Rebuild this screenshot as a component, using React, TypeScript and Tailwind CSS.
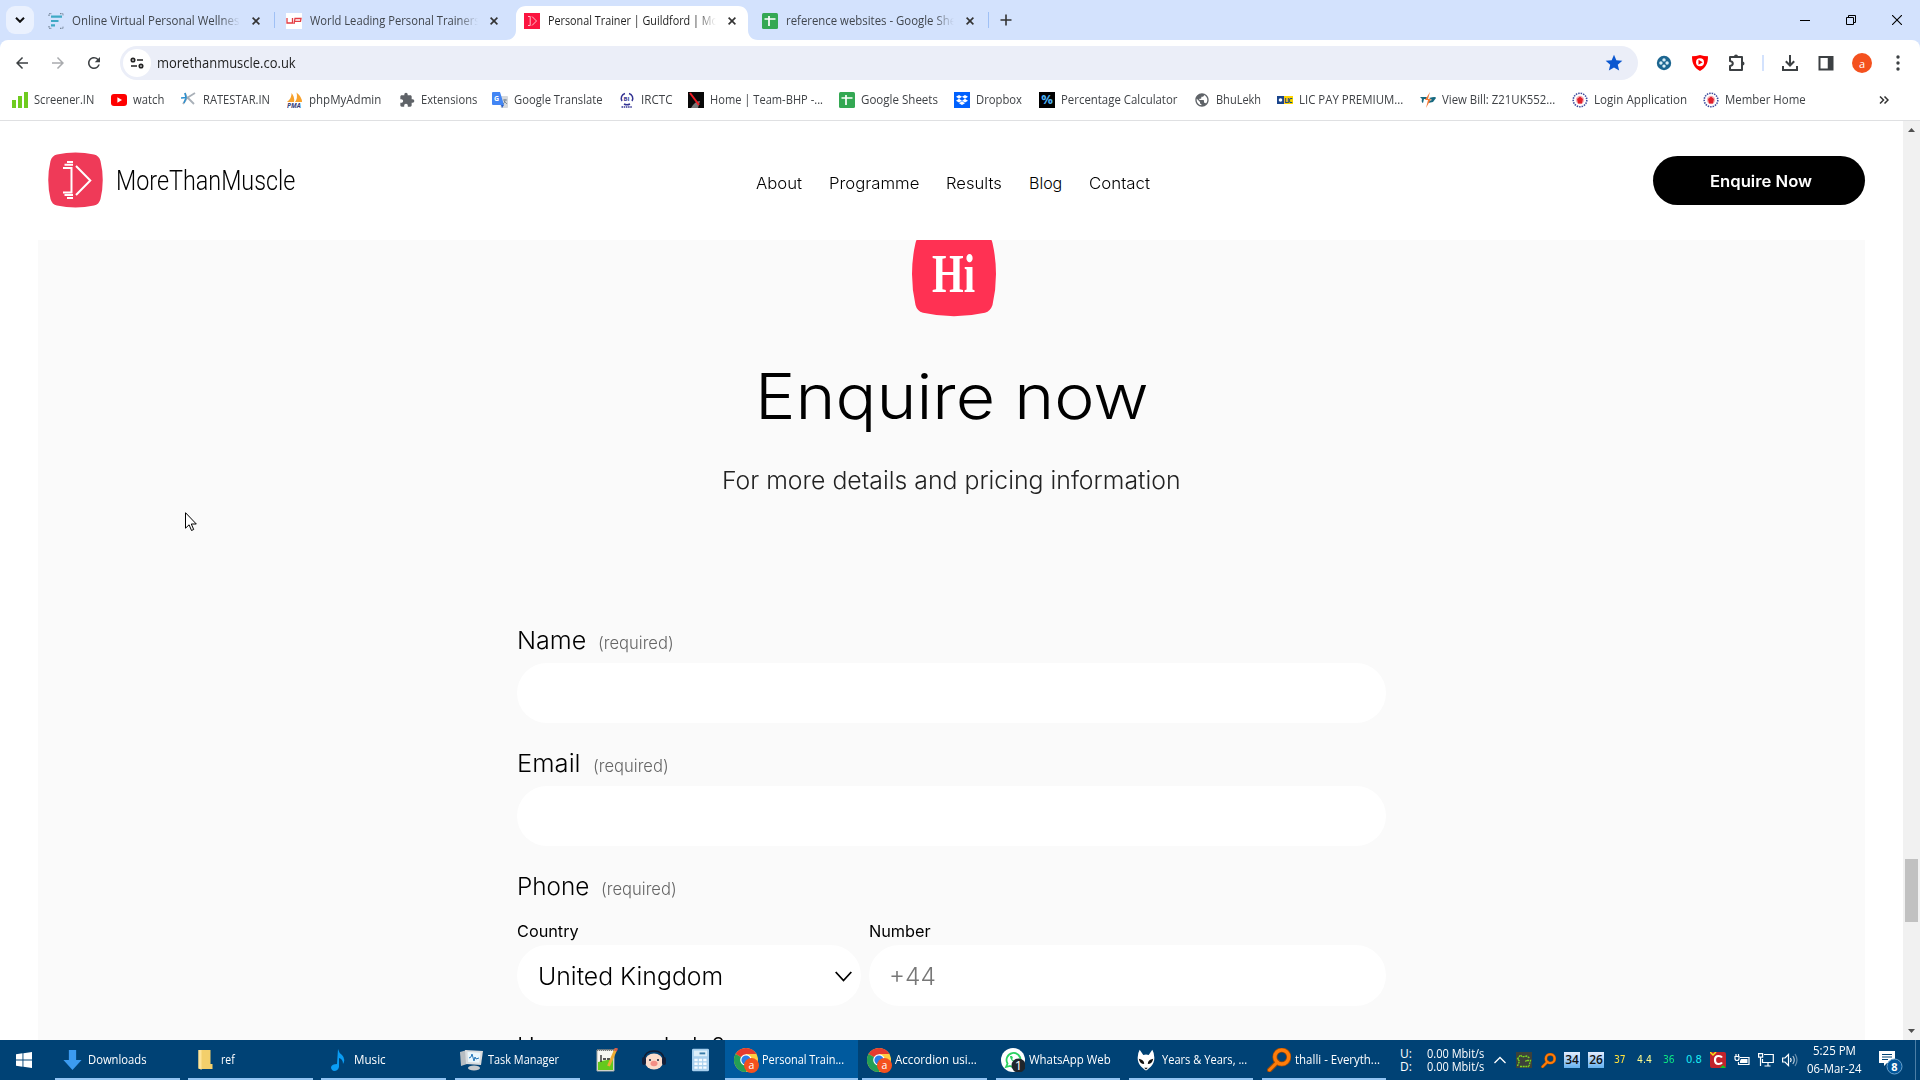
import { useLayoutEffect, useRef, useState, type ReactNode } from "react";
import { FaDropbox } from "react-icons/fa";
import { MdExtension, MdPublic, MdRefresh, MdStar, MdArrowBack, MdArrowForward } from "react-icons/md";

/** One line of text that is stretched or condensed to a given width. */
function Fit({ w, children, className = "" }: { w: number; children: ReactNode; className?: string }) {
  const ref = useRef<HTMLSpanElement>(null);
  const [k, setK] = useState(1);
  useLayoutEffect(() => {
    if (ref.current) setK(w / ref.current.offsetWidth);
  }, [w]);
  return (
    <span className={"block shrink-0 whitespace-nowrap " + className} style={{ width: w }}>
      <span ref={ref} className="inline-block origin-left whitespace-nowrap" style={{ transform: `scaleX(${k})` }}>
        {children}
      </span>
    </span>
  );
}

function X({ className = "" }: { className?: string }) {
  return (
    <svg viewBox="0 0 8 8" className={"size-2 shrink-0 " + className} fill="none" stroke="currentColor" strokeWidth="1.6">
      <path d="M.6.6l6.8 6.8M7.4.6L.6 7.4" />
    </svg>
  );
}

function Sheets() {
  return (
    <svg viewBox="0 0 16 16" className="size-4 shrink-0">
      <rect width="16" height="16" rx="1.5" fill="#34a853" />
      <path d="M7 3v10M2.5 6h11" stroke="#fff" strokeWidth="1.7" />
    </svg>
  );
}

function MuscleIcon() {
  return (
    <svg viewBox="0 0 16 16" className="size-4 shrink-0">
      <rect width="16" height="16" fill="#fb1440" />
      <path d="M4 3.5h2.2v9H4M8 3.5L12.5 8 8 12.5" stroke="#ffc0cb" fill="none" />
    </svg>
  );
}

function LinesIcon() {
  return (
    <svg viewBox="0 0 16 16" className="size-4 shrink-0" fill="none">
      <path d="M1 3V.7h3M12 .7h3V3M1 13v2.3h3M12 15.3h3V13" stroke="#456" strokeWidth=".8" strokeDasharray="1.5 1" />
      <path d="M3 3.7h11M3 8h7.500M3 12.300h4" stroke="#3fa9c5" strokeWidth="2.200" />
    </svg>
  );
}

function UpIcon() {
  return (
    <svg viewBox="0 0 16 16" className="size-4 shrink-0" fill="none">
      <rect width="16" height="16" fill="#fff" />
      <path d="M1 5v5h5.5V5M8 11l1-5.5h6l-.5 2.8H9" stroke="#e33d43" strokeWidth="1.3" />
    </svg>
  );
}

const tabs = [
  { t: "Online Virtual Personal Wellness", w: 173, icon: <LinesIcon />, sep: true },
  { t: "World Leading Personal Trainers", w: 170, icon: <UpIcon />, sep: false },
  { t: "Personal Trainer | Guildford | More", w: 180, icon: <MuscleIcon />, active: true },
  { t: "reference websites - Google Sheets", w: 186, icon: <Sheets />, sep: true },
];

function TabStrip() {
  return (
    <div className="flex h-10 items-stretch bg-[#d3e2fd]">
      <div className="ml-1.5 mr-1.5 mt-1.5 flex size-7 items-center justify-center rounded-[9px] bg-[#eaf1fe]">
        <svg viewBox="0 0 10 6" className="h-1.5 w-2.5" fill="none" stroke="#111" strokeWidth="2"><path d="M1 .8l4 4 4-4" /></svg>
      </div>
      {tabs.map((t) => (
        <div key={t.t} className="relative flex w-[238px] items-center pt-[1px]">
          {t.active && (
            <svg viewBox="0 0 252 34" className="absolute -left-2.5 top-1.5 h-[34px] w-[252px]" fill="#fff">
              <path d="M0 34c6 0 10-4 10-10V10C10 4 14 0 20 0h212c6 0 10 4 10 10v14c0 6 4 10 10 10z" />
            </svg>
          )}
          <div className="relative ml-2 flex items-center">
            {t.icon}
            <div className="ml-2 w-[168px] overflow-hidden [mask-image:linear-gradient(90deg,#000_88%,transparent)]">
              <Fit w={t.w} className={t.active ? "text-[12px] leading-4 text-[#1f1f1f]" : "text-[12px] leading-4 text-[#41464d]"}>{t.t}</Fit>
            </div>
            <X className="ml-3 text-[#333]" />
          </div>
          {t.sep && <i className="absolute right-[3px] top-3 h-4 w-px bg-[#9fc0f5]" />}
        </div>
      ))}
      <svg viewBox="0 0 12 12" className="ml-2 mt-3.5 size-3" fill="none" stroke="#333" strokeWidth="1.6"><path d="M6 .5v11M.5 6h11" /></svg>
      <div className="ml-auto mr-[18px] flex items-center gap-9 text-black">
        <svg viewBox="0 0 10 10" className="size-2.5" stroke="currentColor"><path d="M0 5.5h10" /></svg>
        <svg viewBox="0 0 10 10" className="size-2.5" fill="none" stroke="currentColor"><path d="M.5 2.5h7v7h-7zM2.5 2.5v-2h7v7h-2" /></svg>
        <svg viewBox="0 0 10 10" className="size-2.5" fill="none" stroke="currentColor" strokeWidth="1.1"><path d="M0 0l10 10M10 0L0 10" /></svg>
      </div>
    </div>
  );
}

function Toolbar() {
  return (
    <div className="bg-[#d3e2fd]">
      <div className="flex h-[46px] items-center rounded-t-lg bg-white text-[#3c4043]">
        <MdArrowBack className="ml-[13px] size-[18px]" />
        <MdArrowForward className="ml-[18px] size-[18px] text-[#a9abae]" />
        <MdRefresh className="ml-[18px] size-[18px]" />
        <div className="ml-[17px] flex h-[34px] w-[1518px] items-center rounded-full bg-[#ebeef8]">
          <div className="ml-[3px] flex size-7 items-center justify-center rounded-full bg-white">
            <svg viewBox="0 0 14 12" className="h-3 w-3.5" fill="none" stroke="#222" strokeWidth="1.7">
              <circle cx="3" cy="3" r="1.7" /><path d="M7 3h6M1 9h6" /><circle cx="11" cy="9" r="1.7" />
            </svg>
          </div>
          <Fit w={139} className="ml-1.5 text-[14px] leading-5 text-[#1f1f1f]">morethanmuscle.co.uk</Fit>
          <MdStar className="ml-auto mr-[14px] size-5 text-[#0b57d0]" />
        </div>
        <svg viewBox="0 0 16 16" className="ml-[18px] size-4">
          <circle cx="8" cy="8" r="7.2" fill="#1c6690" />
          <g fill="#d8eef6"><circle cx="8" cy="4.9" r="1.700" /><circle cx="8" cy="11.100" r="1.700" /><circle cx="4.900" cy="8" r="1.700" /><circle cx="11.100" cy="8" r="1.700" /></g>
        </svg>
        <svg viewBox="0 0 16 16" className="ml-5 size-4">
          <path d="M0 1.3Q4 1.3 8 0q4 1.3 8 1.3C16 9 13.500 13 8 16 2.500 13 0 9 0 1.300z" fill="#f00" />
          <circle cx="8" cy="7.300" r="4" fill="#fff" /><path d="M6.500 4.800l4.200 2.500-4.200 2.500z" fill="#f00" />
        </svg>
        <svg viewBox="0 0 18 18" className="ml-[20px] size-[18px]" fill="none" stroke="currentColor" strokeWidth="2">
          <path d="M2 3h12v13H2v-4q2.800-.500 2.800-2.500T2 7z" strokeLinejoin="round" />
          <path d="M6 2.500a2 2 0 0 1 4 0zM14.500 7.500a2 2 0 0 1 0 4z" fill="currentColor" stroke="none" />
        </svg>
        <i className="ml-4 h-4 w-0.5 bg-[#d3e2fd]" />
        <svg viewBox="0 0 16 16" className="ml-[18px] size-4" fill="none" stroke="currentColor" strokeWidth="2"><path d="M8 0v10M3.800 6.300L8 10.500l4.200-4.200M1 11v4h14v-4" /></svg>
        <svg viewBox="0 0 16 16" className="ml-5 size-4" fill="none" stroke="currentColor" strokeWidth="2"><path d="M1.500 2h13v12.500h-13z" /><path d="M12 1v14" strokeWidth="4.500" /></svg>
        <div className="ml-[18px] flex size-5 items-center justify-center rounded-full bg-[#f4511e] text-[11px] leading-none text-white">a</div>
        <svg viewBox="0 0 4 16" className="ml-6 h-4 w-1" fill="currentColor"><circle cx="2" cy="2" r="1.700" /><circle cx="2" cy="8" r="1.700" /><circle cx="2" cy="14" r="1.700" /></svg>
      </div>
    </div>
  );
}

const ic = "size-4 shrink-0";
const emblem = (
  <svg viewBox="0 0 16 16" className={ic}>
    <circle cx="8" cy="8" r="6.800" fill="#fff" stroke="#3b4a9c" strokeWidth="1.600" strokeDasharray="1.500 1" />
    <circle cx="8" cy="8" r="4.200" fill="#f7b5b8" /><path d="M5 7l3-2.500L11 7l-1 4.500H6z" fill="#e0202c" />
  </svg>
);
/** Label, label width, distance to the next bookmark, icon. */
const bookmarks: [string, number, number, ReactNode][] = [
  ["Screener.IN", 60, 99, <svg viewBox="0 0 16 16" className={ic} fill="#6fcb1f"><path d="M0 8h4v8H0zM6 4h4v12H6zM12 0h4v16h-4z" /></svg>],
  ["watch", 31, 70, <svg viewBox="0 0 16 16" className={ic}><rect y="2" width="16" height="12" rx="3" fill="#f00" /><path d="M6.400 5.300L11 8l-4.600 2.700z" fill="#fff" /></svg>],
  ["RATESTAR.IN", 67, 106, <svg viewBox="0 0 16 16" className={ic} fill="none"><path d="M4 1l2 5L14 1M6 6L2 12M7 6l6 6" stroke="#a9b0b8" strokeWidth="1.800" /><path d="M0 6l5-.5L4 1M5 6l-2 5" stroke="#2d91d0" strokeWidth="1.500" /></svg>],
  ["phpMyAdmin", 72, 112, <svg viewBox="0 0 16 16" className={ic}><path d="M0 10Q5 6 4.500 1 8 5 7 10zM8 10q3-4 1.500-9.500Q15 5 15 10z" fill="#f7a12b" /><text x="0" y="15.500" fontSize="6.500" fontWeight="700" fontStyle="italic" fill="#34407a">PMA</text></svg>],
  ["Extensions", 56, 93, <MdExtension className={ic + " text-[#5f6368]"} />],
  ["Google Translate", 89, 127, <svg viewBox="0 0 16 16" className={ic}><path d="M6 4h9q1 0 1 1v10q0 1-1 1H9z" fill="#d5d8dc" /><path d="M1 0h7l4 13H1q-1 0-1-1V1q0-1 1-1z" fill="#4285f4" /><path d="M9 13h3l-2 3z" fill="#2b5fc7" /><text x="2" y="9" fontSize="7" fontWeight="700" fill="#fff">G</text><path d="M11 8h4M13 7v1q0 3-2 4M12 9l3 3" stroke="#6b7a86" strokeWidth=".8" fill="none" /></svg>],
  ["IRCTC", 31, 69, <svg viewBox="0 0 16 16" className={ic} fill="none" stroke="#353593"><path d="M3 9a5 5 0 0 1 3-7.500M10 1.500A5 5 0 0 1 13 9M5 12q3 1.500 6 0" strokeWidth="1.500" /><text x="4.500" y="9" fontSize="6" fontWeight="700" fill="#353593" stroke="none">BI</text><path d="M2.500 15h11" strokeWidth="1.600" strokeDasharray="1.500 .7" /></svg>],
  ["Home | Team-BHP -...", 113, 151, <svg viewBox="0 0 16 16" className={ic}><path d="M0 0h16v16H0z" fill="#080808" /><path d="M3 16q4-7 9-7l-2 7z" fill="#777" /><path d="M2 1l9 12" stroke="#f01c24" strokeWidth="2" /></svg>],
  ["Google Sheets", 77, 115, <Sheets />],
  ["Dropbox", 46, 85, <span className="flex size-4 shrink-0 items-center justify-center bg-[#0061fe]"><FaDropbox className="size-3 text-white" /></span>],
  ["Percentage Calculator", 116, 155, <span className="flex size-4 shrink-0 items-center justify-center bg-black text-[13px] font-bold leading-none text-[#4db2f5]">%</span>],
  ["BhuLekh", 45, 83, <MdPublic className={ic + " text-[#5f6368]"} />],
  ["LIC PAY PREMIUM...", 104, 143, <svg viewBox="0 0 16 16" className={ic}><path d="M0 4h7v8H0z" fill="#19448c" /><path d="M7 4h9v8H7z" fill="#ffd400" /><circle cx="3.500" cy="8" r="1.800" fill="#fff" /><text x="7.300" y="10.500" fontSize="6.500" fontWeight="700" textLength="8" fill="#19448c">LIC</text></svg>],
  ["View Bill: Z21UK552...", 113, 152, <svg viewBox="0 0 16 16" className={ic}><path d="M0 5h7l-1 2H4l-1 4Q1 10 2 7zM9 6q7-2 7 0l-3 4-5 1 1-2 3-1z" fill="#17687f" /><path d="M10 0L5 8h3l-2 8 5-9H8z" fill="#f47a35" /></svg>],
  ["Login Application", 93, 131, emblem],
  ["Member Home", 81, 110, emblem],
];

function Bookmarks() {
  return (
    <div className="flex h-[35px] items-center border-b border-[#dfe0e2] bg-white pb-[7px] pl-3 text-[12px] leading-4 text-[#3f4246]">
      {bookmarks.map(([label, w, stride, icon]) => (
        <div key={label} className="flex shrink-0 items-center gap-1.5" style={{ width: stride }}>
          {icon}
          <Fit w={w}>{label}</Fit>
        </div>
      ))}
      <svg viewBox="0 0 10 8" className="ml-auto mr-[31px] h-2 w-2.5 shrink-0" fill="none" stroke="#333" strokeWidth="1.500"><path d="M1 .5L4.500 4 1 7.500M5.500.5L9 4 5.500 7.500" /></svg>
    </div>
  );
}

function SiteHeader() {
  return (
    <header className="flex h-[119px] shrink-0 items-center bg-white pb-px pl-12 pr-[38px] text-black">
      <svg viewBox="0 0 55 56" className="h-14 w-[55px]">
        <path d="M9 2.500Q27.500-1.500 46 2.500q5 1 6.500 6.500 4.500 19 0 38-1.500 5.500-6.500 6.500-18.500 4-37 0-5-1-6.500-6.500-4.500-19 0-38Q4 3.500 9 2.500z" fill="#ef3a58" />
        <path d="M19 10h6M16.500 12.800H25M15 16h8.500v24.500H15M16.500 43H25M19 46h6M28 14l14.300 14.500L28 43" fill="none" stroke="#fff" strokeWidth="2" />
      </svg>
      <Fit w={179} className="ml-[13px] mt-px font-[Roboto] text-[27px] font-[350] leading-8">MoreThanMuscle</Fit>
      <nav className="ml-[461px] mt-[5px] flex gap-[27px] text-[16px] font-[350] leading-5">
        <Fit w={46}>About</Fit>
        <Fit w={90}>Programme</Fit>
        <Fit w={56}>Results</Fit>
        <Fit w={33}>Blog</Fit>
        <Fit w={61}>Contact</Fit>
      </nav>
      <button className="ml-auto flex h-[49px] w-[212px] items-center rounded-full bg-black pl-[55px] pt-0.5 text-[16px] font-semibold leading-5 text-white">
        <Fit w={102}>Enquire Now</Fit>
      </button>
    </header>
  );
}

function Label({ text, w }: { text: string; w: number }) {
  return (
    <div className="flex h-[30px] items-baseline gap-3 text-[24px] font-[350] leading-[30px] text-black">
      <Fit w={w}>{text}</Fit>
      <Fit w={76} className="text-[17px] text-[#666]">(required)</Fit>
    </div>
  );
}

function Enquiry() {
  return (
    <main className="ml-[38px] flex w-[1827px] flex-1 flex-col items-center overflow-hidden bg-[#fafafa]">
      <div className="relative ml-[5px] h-[78px] w-[88px] shrink-0">
        <svg viewBox="0 10 88 78" className="h-[78px] w-[88px]">
          <path d="M14 4Q44-3 74 4q7 2 8.500 9 7 31 0 62-2 6-7.500 7.800-31 7-62 0-6-1.800-7.500-7.800-7-31 0-62Q7 6 14 4z" fill="#ff3153" />
        </svg>
        <div className="absolute left-[22px] top-[4px] font-['Liberation_Serif'] text-[54px] font-bold leading-[60px] text-white"><Fit w={43}>Hi</Fit></div>
      </div>
      <h1 className="mt-[38px] text-[63px] font-light leading-20 text-black"><Fit w={394}>Enquire now</Fit></h1>
      <p className="mt-[29px] text-[24px] font-light leading-8 text-[#222]"><Fit w={459}>For more details and pricing information</Fit></p>
      <form className="mt-[129px] flex w-[869px] flex-col">
        <Label text="Name" w={69} />
        <div className="mt-[7px] h-[60px] shrink-0 rounded-full bg-white" />
        <div className="mt-[26px]"><Label text="Email" w={64} /></div>
        <div className="mt-[7px] h-[60px] shrink-0 rounded-full bg-white" />
        <div className="mt-[26px]"><Label text="Phone" w={72} /></div>
        <div className="mt-[19px] flex gap-2 text-[16px] leading-5 text-black">
          <div className="w-[344px]">
            <Fit w={62} className="font-[380]">Country</Fit>
            <div className="mt-1 flex h-[61px] items-center rounded-full bg-white pl-5 pr-2.5 pt-px text-[24px] font-[350] leading-8">
              <Fit w={185} className="ml-px mt-0.5">United Kingdom</Fit>
              <svg viewBox="0 0 17 11" className="ml-auto mr-[-1px] h-[11px] w-[17px]" fill="none" stroke="#000" strokeWidth="1.800"><path d="M.7 1l7.800 8.500L16.300 1" /></svg>
            </div>
          </div>
          <div className="flex-1">
            <Fit w={62} className="font-[380]">Number</Fit>
            <div className="mt-1 flex h-[61px] items-center rounded-full bg-white pl-5 pt-px text-[24px] font-light leading-8 text-[#777]"><Fit w={47} className="mt-0.5">+44</Fit></div>
          </div>
        </div>
        <div className="mt-[26px] text-[24px] font-[350] leading-[30px] text-black"><Fit w={207}>How can we help?</Fit></div>
      </form>
    </main>
  );
}

function Scrollbar() {
  return (
    <div className="flex w-[17px] flex-col items-center bg-[#f1f1f1]">
      <svg viewBox="0 0 7 4" className="mt-[7px] h-1 w-[7px]" fill="#505050"><path d="M3.500 0L7 4H0z" /></svg>
      <div className="mt-[727px] h-[63px] w-[13px] bg-[#c1c1c1]" />
      <svg viewBox="0 0 7 4" className="mb-[7px] mt-auto h-1 w-[7px]" fill="#505050"><path d="M3.500 4L7 0H0z" /></svg>
    </div>
  );
}

function Chrome() {
  return (
    <svg viewBox="0 0 24 24" className="size-6 shrink-0 overflow-visible">
      <circle cx="12" cy="12" r="12" fill="#ffcd40" />
      <path d="M12 12L1.600 6A12 12 0 0 1 22.400 6H12z" fill="#e53b2f" />
      <path d="M1.600 6A12 12 0 0 0 12 24l5-9-5-3z" fill="#239f55" />
      <circle cx="12" cy="12" r="5.800" fill="#fff" /><circle cx="12" cy="12" r="4.600" fill="#2b7de9" />
      <circle cx="17.500" cy="17.500" r="7.500" fill="#f4511e" />
      <text x="17.500" y="21" fontSize="10.500" textAnchor="middle" fill="#fff">a</text>
    </svg>
  );
}

function Search({ className }: { className: string }) {
  return (
    <svg viewBox="0 0 24 24" className={className} fill="none">
      <path d="M10.500 14L2.500 22" stroke="#9d4b08" strokeWidth="5" strokeLinecap="round" /><circle cx="14.800" cy="9" r="7" stroke="#9d4b08" strokeWidth="5" />
      <path d="M10.500 14L2.500 22" stroke="#ff7d0a" strokeWidth="3" strokeLinecap="round" /><circle cx="14.800" cy="9" r="7" stroke="#ff7d0a" strokeWidth="3.400" />
    </svg>
  );
}

function Task({ box, icon, label, w, active }: { box: string; icon: ReactNode; label: string; w: number; active?: boolean }) {
  return (
    <div className={"flex h-10 shrink-0 items-center gap-1 border-b-2 border-[#92c4f3] pt-0.5 " + (active ? "bg-[#005a9e] " : "") + box}>
      <span className="flex size-6 shrink-0 items-center justify-center">{icon}</span>
      <Fit w={w}>{label}</Fit>
    </div>
  );
}

function Taskbar() {
  return (
    <footer className="flex h-10 shrink-0 items-center bg-[#004275] text-[12px] leading-4 text-white">
      <svg viewBox="0 0 16 16" className="ml-4 size-4 shrink-0" fill="#fff"><path d="M0 2.300L6.500 1.300v6.200H0zM7.400 1.200L16 0v7.500H7.400zM0 8.500h6.500v6.200L0 13.700zM7.400 8.500H16V16l-8.600-1.200z" /></svg>
      <Task box="ml-[23px] w-[125px] pl-[5px]" w={59} label="Downloads" icon={<svg viewBox="0 0 20 22" className="h-[20px] w-[19px]"><path d="M6 0h8v11h6L10 22 0 11h6z" fill="#3c9bf0" /></svg>} />
      <Task box="ml-2 w-[125px] pl-[5px]" w={14} label="ref" icon={<svg viewBox="0 0 14 20" className="h-5 w-[15px]"><path d="M0 0h12v14h2v5H0z" fill="#f3cf6b" /><path d="M0 0h3v20l-3-2z" fill="#fde49a" /></svg>} />
      <Task box="ml-2 w-[125px] pl-[5px]" w={32} label="Music" icon={<svg viewBox="0 0 14 22" className="h-[22px] w-[14px]"><path d="M7 0q1 4 4 6 4 4 1 9 0-5-4-6v9q-1 4-5 4-3-1-3-4 1-3 6-3z" fill="#0a9df4" /></svg>} />
      <Task box="ml-[9px] w-[125px] pl-[5px]" w={71} label="Task Manager" icon={<svg viewBox="0 0 24 22" className="h-[22px] w-6"><path d="M0 3l7-2v14l-6 2z" fill="#b7bdc2" /><path d="M5 1l18 1-2 14-15-1z" fill="#d9dcde" /><path d="M7.500 3l13 .7-1.300 10-11-.7z" fill="#eaf7fd" /><path d="M9 9l2-1 1-3 2 7 1-4 1 2 3-1" stroke="#2375b8" fill="none" /><ellipse cx="14" cy="19" rx="6" ry="2.500" fill="#c7cbce" /></svg>} />
      <svg viewBox="0 0 22 24" className="ml-4 h-6 w-[22px] shrink-0"><path d="M1 2h17v21H1z" fill="#f7f7f2" stroke="#a8aca5" /><path d="M1 2h17" stroke="#777" strokeDasharray="1 1" strokeWidth="2" /><path d="M2 14q8-2 15-3v11H2z" fill="#65c91d" /><path d="M5 7v7M7 11h3M11 11h3" stroke="#222" strokeWidth="1.300" /><path d="M20 1L12.500 18" stroke="#edac33" strokeWidth="3" /><path d="M20.500 0l-1 3" stroke="#d65d4b" strokeWidth="3" /></svg>
      <svg viewBox="0 0 24 20" className="ml-[24px] h-5 w-6 shrink-0"><ellipse cx="12" cy="11.500" rx="9" ry="8" fill="#fbdccb" /><path d="M2 9Q3 1 12 1t10 8" fill="none" stroke="#101c33" strokeWidth="1.600" /><ellipse cx="12" cy="13.500" rx="3.500" ry="2.700" fill="#f38f86" /><g fill="#14203a"><rect y="7" width="4" height="8" rx="2" /><rect x="20" y="7" width="4" height="8" rx="2" /><circle cx="8" cy="10" r="1" /><circle cx="16" cy="10" r="1" /></g></svg>
      <svg viewBox="0 0 18 24" className="ml-[26px] h-6 w-[17px] shrink-0"><rect width="18" height="24" rx="1.500" fill="#a8d0ee" /><path d="M2 2h14v6H2z" fill="#dceffa" /><path d="M8 5h6" stroke="#397da9" strokeWidth="2" /><path d="M2.500 12h13M2.500 16h13M2.500 20h13" stroke="#f7fcff" strokeWidth="2.500" strokeDasharray="3.500 1.200" /></svg>
      <Task box="ml-4 w-[133px] pl-[9px]" w={82} label="Personal Train..." active icon={<Chrome />} />
      <Task box="ml-1 w-[125px] pl-[5px]" w={82} label="Accordion usi..." icon={<Chrome />} />
      <Task box="ml-[9px] w-[124px] pl-[5px]" w={82} label="WhatsApp Web" icon={<svg viewBox="0 0 24 24" className="size-6"><circle cx="12" cy="12" r="12" fill="#fff" /><path d="M5 19l1.500-3.500A7 7 0 1 1 9 18z" fill="none" stroke="#2bd160" strokeWidth="1.800" /><path d="M9 8q0 5 6 7l1-2-2-1-1 1-2-2 1-1-1-2z" fill="#2bd160" /><circle cx="17.500" cy="17.500" r="7" fill="#20252b" /><text x="17.500" y="22" fontSize="13" textAnchor="middle" fill="#fff">1</text></svg>} />
      <Task box="ml-[9px] w-[124px] pl-[5px]" w={85} label="Years & Years, ..." icon={<svg viewBox="0 0 20 24" className="h-[23px] w-[18px]"><path d="M3 0l4 6q3-1.500 6 0l4-6q3 5 2 12-1 5-6 9-3 4-6 0-5-4-6-9Q0 5 3 0z" fill="#fff" /><path d="M2 10q6 1 6 6-5 0-6-6zM18 10q-6 1-6 6 5 0 6-6zM8 20h4l-2 2z" fill="#111" /></svg>} />
      <Task box="ml-[9px] w-[124px] pl-[5px]" w={85} label="thalli - Everyth..." icon={<Search className="size-6" />} />
      <div className="ml-[14px] flex flex-col text-[12px] leading-[13px]"><span>U:</span><span>D:</span></div>
      <div className="ml-auto flex w-[57px] shrink-0 flex-col text-[12px] leading-[13px]"><Fit w={57}>0.00 Mbit/s</Fit><Fit w={57}>0.00 Mbit/s</Fit></div>
      <svg viewBox="0 0 12 8" className="ml-2.5 h-2 w-3 shrink-0" fill="none" stroke="#fff" strokeWidth="1.300"><path d="M.5 7L6 1.500 11.500 7" /></svg>
      <svg viewBox="0 0 16 16" className="ml-[10px] size-4 shrink-0"><path d="M0 0h16v16H0z" fill="#3c413b" /><path d="M1.500 14l2-5-2-2 3-4 2 2 4-1 3 2M4 14.500h9M11 8.500h3.500L13 14M11 8.500l-2 1" fill="none" stroke="#79d422" strokeWidth="1.300" strokeDasharray="2 .7" /></svg>
      <Search className="ml-[9px] size-[15px] shrink-0" />
      <span className="ml-2 flex size-4 shrink-0 items-center justify-center bg-linear-to-b from-[#e3edff] to-[#63b1ef] text-[12px] font-semibold leading-none text-[#111]">34</span>
      <span className="ml-2 flex size-4 shrink-0 items-center justify-center bg-linear-to-b from-[#e3edff] to-[#63b1ef] text-[12px] font-semibold leading-none text-[#111]">26</span>
      <div className="ml-2.5 flex gap-[11px] font-['DejaVu_Sans'] text-[10px] leading-3">
        <Fit w={12} className="text-[#ffe13b]">37</Fit><Fit w={15} className="text-[#fffb8c]">4.4</Fit><Fit w={12} className="text-[#0be582]">36</Fit><Fit w={16} className="text-[#1aecf4]">0.8</Fit>
      </div>
      <svg viewBox="0 0 16 16" className="ml-2 size-4 shrink-0"><rect width="16" height="16" rx="2" fill="#c3242c" /><path d="M12 5.500Q11 4 8.500 4 5 4 5 8t3.500 4Q11 12 12 10.500" fill="none" stroke="#fff" strokeWidth="2.200" /><path d="M0 0l3 3 3-3" fill="none" stroke="#f7e217" strokeWidth="1.500" /><path d="M10 16l3-3 3 3z" fill="#16c620" /></svg>
      <svg viewBox="0 0 16 12" className="ml-2 h-3 w-4 shrink-0" fill="none" stroke="#fff" strokeWidth="1.200"><path d="M6 3.500h9v7H4.500V8M1 2.500h4v2q0 2-2 2t-2-2zM2 0v2.500M4.500 0v2.500" /><path d="M7 5h6.500v4H6V7z" fill="#fff" stroke="none" /></svg>
      <svg viewBox="0 0 16 14" className="ml-2 h-3.5 w-4 shrink-0" fill="none" stroke="#fff" strokeWidth="1.200"><path d="M6 1.500h9.300v8H4.500V6M10 9.500V13M6.500 13h6M.6.600h4v3.500h-4zM2.500 4v9" /></svg>
      <svg viewBox="0 0 16 14" className="ml-2 h-3.5 w-4 shrink-0" fill="none" stroke="#fff" strokeWidth="1.200"><path d="M.6 5v4H3l3.500 3.500v-11L3 5zM8.500 5q1.300 2 0 4" /><path d="M10.800 3q3 4 0 8" opacity=".7" /><path d="M13 1q4 6 0 12" opacity=".4" /></svg>
      <div className="ml-[9px] flex w-[55px] shrink-0 flex-col items-center leading-[18px]"><Fit w={43}>5:25 PM</Fit><Fit w={55}>06-Mar-24</Fit></div>
      <svg viewBox="0 0 24 24" className="ml-[17px] mt-1.5 size-6 shrink-0"><path d="M0 0h16v12H8l-3 3v-3H0z" fill="#fff" /><path d="M3 3.500h10M3 6h10M3 8.500h6" stroke="#004275" strokeWidth="1.200" /><circle cx="15.500" cy="15.500" r="7.500" fill="#00559a" stroke="#6aa2cc" /><text x="15.500" y="19.500" fontSize="11" fontWeight="700" textAnchor="middle" fill="#fff">8</text></svg>
      <i className="ml-3 mr-1 h-10 w-px shrink-0 bg-[#4b7ea6]" />
    </footer>
  );
}

export default function App() {
  return (
    <div className="relative flex h-[1080px] w-[1920px] flex-col overflow-hidden bg-white font-['Open_Sans',sans-serif]">
      <TabStrip />
      <Toolbar />
      <Bookmarks />
      <div className="flex min-h-0 flex-1 font-[Inter,sans-serif]">
        <div className="flex min-w-0 flex-1 flex-col">
          <SiteHeader />
          <Enquiry />
        </div>
        <Scrollbar />
      </div>
      <Taskbar />
      <svg viewBox="0 0 12 20" className="absolute left-[185px] top-[512px] h-5 w-3" fill="#fff" stroke="#000"><path d="M.5.700v15.500l3.600-3.400 2.400 5.700 2.200-1-2.400-5.500h5z" /></svg>
    </div>
  );
}
